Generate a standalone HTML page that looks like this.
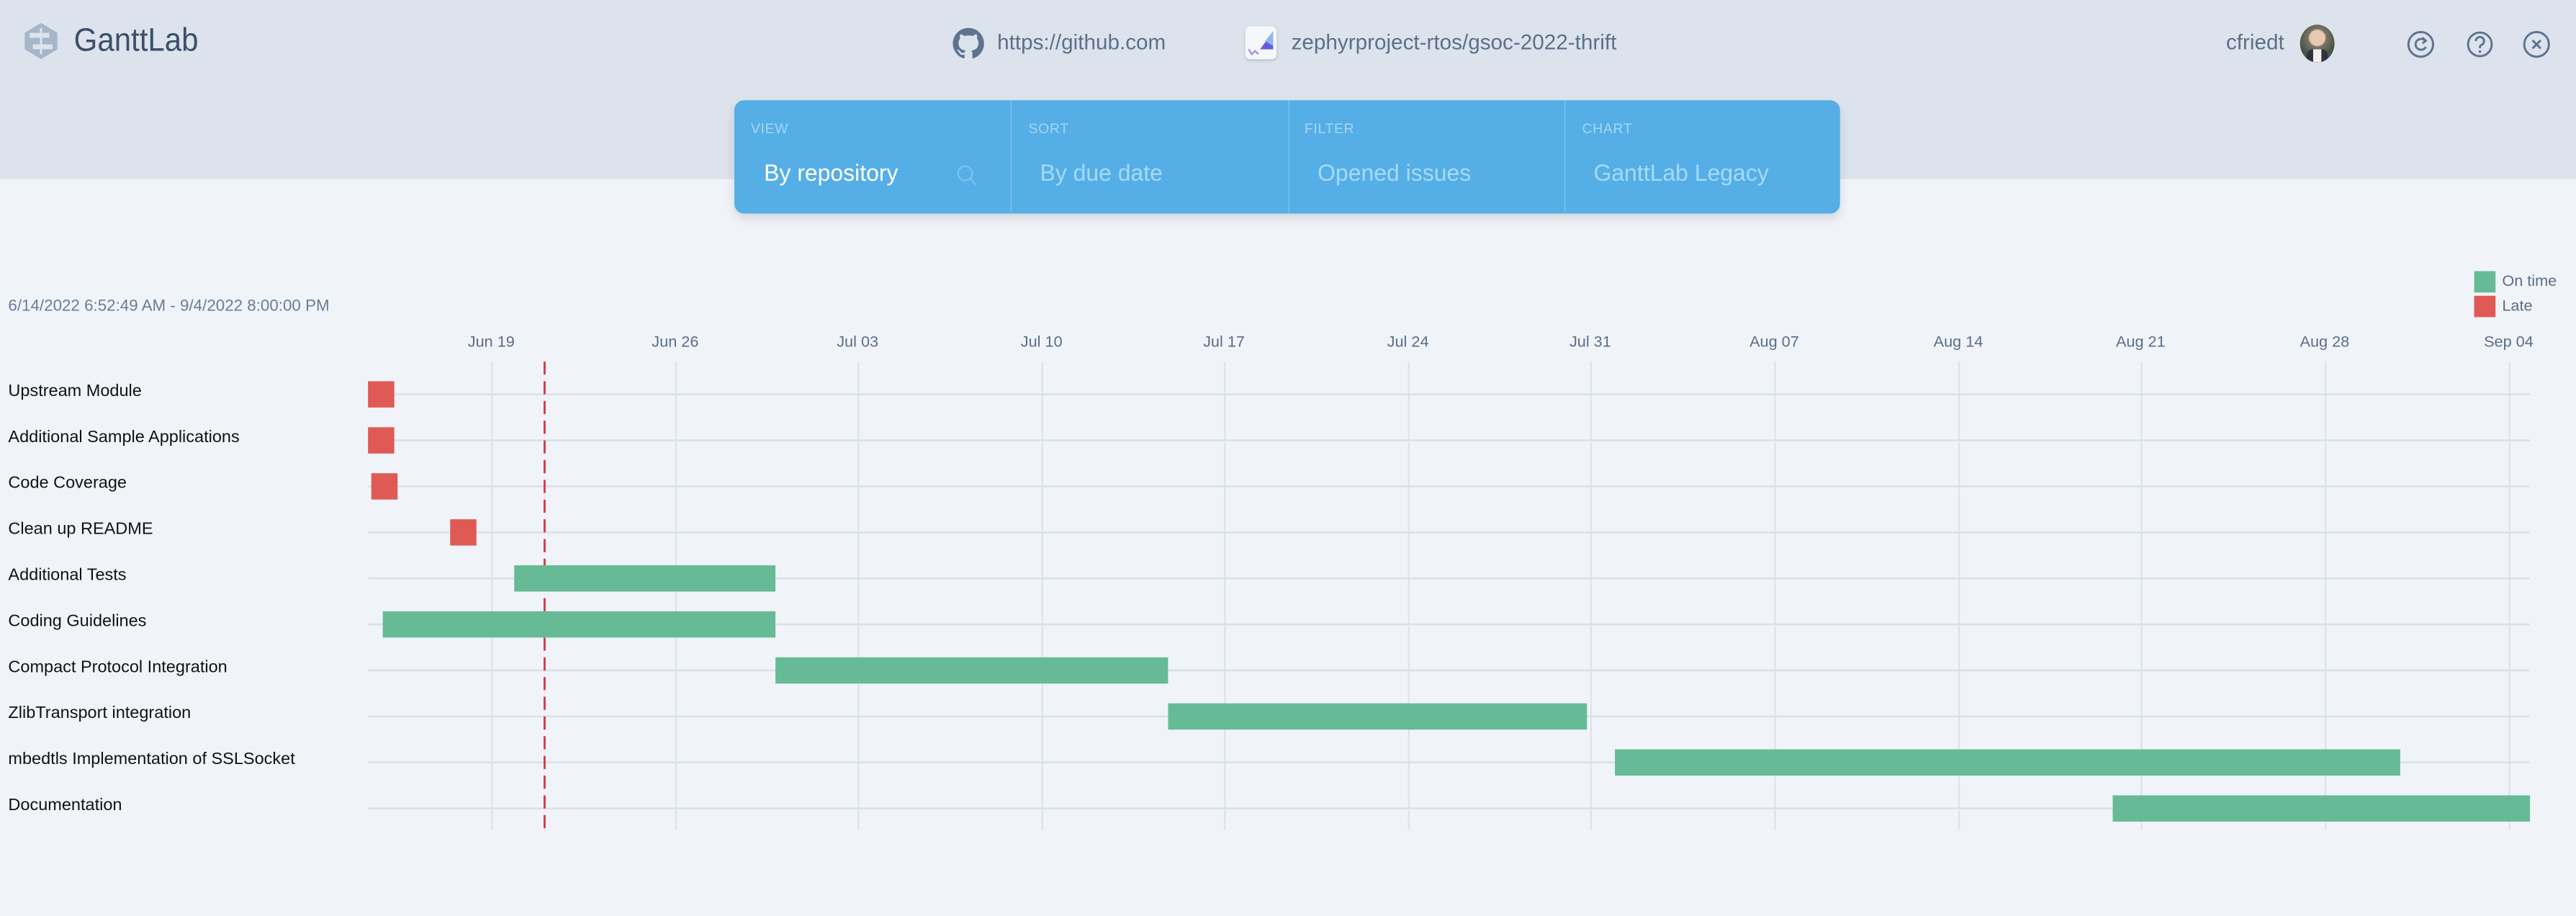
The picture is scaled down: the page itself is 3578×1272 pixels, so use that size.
<!DOCTYPE html>
<html><head><meta charset="utf-8"><style>
html,body{margin:0;padding:0;width:3578px;height:1272px;overflow:hidden;background:#f0f4f9}
#w{position:absolute;left:0;top:0;width:1568px;height:557.4px;transform:scale(2.2819);transform-origin:0 0;font-family:"Liberation Sans",sans-serif}
.a{position:absolute;white-space:nowrap}
#hd{position:absolute;left:0;top:0;width:1568px;height:109px;background:#dce3ec}
.lbl{font-size:8.5px;color:#a6d6f4;letter-spacing:.3px}
.val{font-size:14px;color:#a5daf8;top:97px}
.ax{font-size:9.5px;color:#5a6d88;top:203px;transform:translateX(-50%)}
.rl{font-size:10.3px;color:#111;left:5px}
.bar{position:absolute;height:16px}
.g{background:#66bb96}.r{background:#df5a54}
</style></head><body><div id="w">
<div id="hd"></div>
<svg class="a" style="left:15px;top:14px" width="20" height="22" viewBox="0 0 20 22"><polygon points="10,0 20,6 20,16 10,22 0,16 0,6" fill="#a6b5ca"/><rect x="3" y="6" width="12" height="3" fill="#dce3ec"/><rect x="5" y="13" width="12" height="3" fill="#dce3ec"/><rect x="9.3" y="3" width="1.4" height="16" fill="#dce3ec"/></svg>
<div class="a" style="left:45px;top:14px;font-size:20px;color:#3d4f6a;transform:scaleX(.92);transform-origin:left">GanttLab</div>
<svg class="a" style="left:580px;top:17px" width="19" height="19" viewBox="0 0 16 16"><path fill="#5f7390" d="M8 0C3.58 0 0 3.58 0 8c0 3.54 2.29 6.53 5.47 7.59.4.07.55-.17.55-.38 0-.19-.01-.82-.01-1.49-2.01.37-2.53-.49-2.69-.94-.09-.23-.48-.94-.82-1.13-.28-.15-.68-.52-.01-.53.63-.01 1.080.58 1.23.82.72 1.21 1.87.87 2.33.66.07-.52.28-.87.51-1.07-1.78-.2-3.64-.89-3.64-3.95 0-.87.31-1.59.82-2.15-.08-.2-.36-1.02.08-2.12 0 0 .67-.21 2.2.82.64-.18 1.32-.27 2-.27.68 0 1.36.09 2 .27 1.53-1.04 2.2-.82 2.2-.82.44 1.1.16 1.92.08 2.12.51.56.82 1.27.82 2.15 0 3.07-1.87 3.75-3.65 3.95.29.25.54.73.54 1.48 0 1.07-.01 1.93-.01 2.2 0 .21.15.46.55.38A8.013 8.013 0 0016 8c0-4.42-3.58-8-8-8z"/></svg>
<div class="a" style="left:607px;top:18px;font-size:13px;color:#5d6f8a">https://github.com</div>
<div class="a" style="left:758px;top:16px;width:19px;height:20px;background:#f5f7fa;border-radius:3px;box-shadow:0 1px 2px rgba(0,0,0,.15)"><svg width="19" height="20" viewBox="0 0 19 20"><polygon points="17,3 17,14 9,14" fill="#6a5be0"/><polygon points="17,3 12,9 17,12" fill="#8fb5f5"/><path d="M2 14 L4 17 L6 15 L8 17" stroke="#a887e8" stroke-width="1" fill="none"/></svg></div>
<div class="a" style="left:786px;top:18px;font-size:13px;color:#5d6f8a">zephyrproject-rtos/gsoc-2022-thrift</div>
<div class="a" style="left:1355px;top:18px;font-size:13px;color:#5d6f8a">cfriedt</div>
<div class="a" style="left:1400px;top:15px;width:21px;height:23px;border-radius:50%;background:radial-gradient(circle at 50% 35%,#e8c8b0 0 25%,#7a7566 30%,#4c5448 60%);overflow:hidden"><div style="position:absolute;left:4px;top:15px;width:13px;height:9px;background:#2f3040;border-radius:4px 4px 0 0"></div><div style="position:absolute;left:8px;top:15px;width:5px;height:8px;background:#eee"></div></div>
<svg class="a" style="left:1464px;top:17px" width="90" height="20" viewBox="0 0 90 20">
<g fill="none" stroke="#5f7390" stroke-width="1.3"><circle cx="9.5" cy="10" r="7.5"/><path d="M12.3 8 A3.3 3.3 0 1 0 12.6 11.5"/><path d="M10.5 5.8 L12.6 7.8 L10.6 9.4" /><circle cx="45.5" cy="10" r="7.2"/><path d="M43 8 A2.5 2.5 0 1 1 46.5 10.3 C45.6 10.8 45.5 11.3 45.5 12.3"/><circle cx="80" cy="10" r="7.5"/><path d="M77.5 7.5 L82.5 12.5 M82.5 7.5 L77.5 12.5"/></g><circle cx="45.5" cy="14.4" r=".8" fill="#5f7390"/></svg>
<div class="a" style="left:447px;top:61px;width:673px;height:69px;background:#55aee6;border-radius:6px;box-shadow:0 3px 6px rgba(0,0,0,.12)"></div>
<div class="a" style="left:615px;top:61px;width:1px;height:69px;background:#6fbcec"></div>
<div class="a" style="left:784px;top:61px;width:1px;height:69px;background:#6fbcec"></div>
<div class="a" style="left:952px;top:61px;width:1px;height:69px;background:#6fbcec"></div>
<div class="a lbl" style="left:457px;top:73px">VIEW</div>
<div class="a lbl" style="left:626px;top:73px">SORT</div>
<div class="a lbl" style="left:794px;top:73px">FILTER</div>
<div class="a lbl" style="left:963px;top:73px">CHART</div>
<div class="a val" style="left:465px;color:#fff">By repository</div>
<div class="a val" style="left:633px">By due date</div>
<div class="a val" style="left:802px">Opened issues</div>
<div class="a val" style="left:970px">GanttLab Legacy</div>
<svg class="a" style="left:582px;top:100px" width="14" height="14" viewBox="0 0 14 14"><circle cx="5.5" cy="5.5" r="4.3" fill="none" stroke="#7cc2ee" stroke-width="1"/><path d="M8.6 8.6 L12 12.5" stroke="#7cc2ee" stroke-width="1"/></svg>
<div class="a" style="left:5px;top:181px;font-size:9.8px;color:#6b7c93">6/14/2022 6:52:49 AM - 9/4/2022 8:00:00 PM</div>
<div class="a" style="left:1506px;top:165px;width:13px;height:13px;background:#66bb96"></div>
<div class="a" style="left:1506px;top:180px;width:13px;height:13px;background:#df5a54"></div>
<div class="a" style="left:1523px;top:166px;font-size:9.5px;color:#5a6d88">On time</div>
<div class="a" style="left:1523px;top:181px;font-size:9.5px;color:#5a6d88">Late</div>
<svg class="a" style="left:0;top:0" width="1568" height="557">
<g stroke="#dde3eb" stroke-width="1">
<line x1="299.5" y1="220" x2="299.5" y2="505"/><line x1="411.5" y1="220" x2="411.5" y2="505"/><line x1="522.5" y1="220" x2="522.5" y2="505"/><line x1="634.5" y1="220" x2="634.5" y2="505"/><line x1="745.5" y1="220" x2="745.5" y2="505"/><line x1="857.5" y1="220" x2="857.5" y2="505"/><line x1="968.5" y1="220" x2="968.5" y2="505"/><line x1="1080.5" y1="220" x2="1080.5" y2="505"/><line x1="1192.5" y1="220" x2="1192.5" y2="505"/><line x1="1303.5" y1="220" x2="1303.5" y2="505"/><line x1="1415.5" y1="220" x2="1415.5" y2="505"/><line x1="1527.5" y1="220" x2="1527.5" y2="505"/>
</g>
<g stroke="#dbe1ea" stroke-width="1.2">
<line x1="224" y1="240" x2="1540" y2="240"/><line x1="224" y1="268" x2="1540" y2="268"/><line x1="224" y1="296" x2="1540" y2="296"/><line x1="224" y1="324" x2="1540" y2="324"/><line x1="224" y1="352" x2="1540" y2="352"/><line x1="224" y1="380" x2="1540" y2="380"/><line x1="224" y1="408" x2="1540" y2="408"/><line x1="224" y1="436" x2="1540" y2="436"/><line x1="224" y1="464" x2="1540" y2="464"/><line x1="224" y1="492" x2="1540" y2="492"/>
</g>
<line x1="331.5" y1="220" x2="331.5" y2="505" stroke="#d44048" stroke-width="1.3" stroke-dasharray="8,4"/>
</svg>
<div class="a ax" style="left:299px">Jun 19</div><div class="a ax" style="left:411px">Jun 26</div><div class="a ax" style="left:522px">Jul 03</div><div class="a ax" style="left:634px">Jul 10</div><div class="a ax" style="left:745px">Jul 17</div><div class="a ax" style="left:857px">Jul 24</div><div class="a ax" style="left:968px">Jul 31</div><div class="a ax" style="left:1080px">Aug 07</div><div class="a ax" style="left:1192px">Aug 14</div><div class="a ax" style="left:1303px">Aug 21</div><div class="a ax" style="left:1415px">Aug 28</div><div class="a ax" style="left:1527px">Sep 04</div>
<div class="a rl" style="top:233px">Upstream Module</div>
<div class="a rl" style="top:261px">Additional Sample Applications</div>
<div class="a rl" style="top:289px">Code Coverage</div>
<div class="a rl" style="top:317px">Clean up README</div>
<div class="a rl" style="top:345px">Additional Tests</div>
<div class="a rl" style="top:373px">Coding Guidelines</div>
<div class="a rl" style="top:401px">Compact Protocol Integration</div>
<div class="a rl" style="top:429px">ZlibTransport integration</div>
<div class="a rl" style="top:457px">mbedtls Implementation of SSLSocket</div>
<div class="a rl" style="top:485px">Documentation</div>
<div class="bar r" style="left:224px;top:232px;width:16px"></div>
<div class="bar r" style="left:224px;top:260px;width:16px"></div>
<div class="bar r" style="left:226px;top:288px;width:16px"></div>
<div class="bar r" style="left:274px;top:316px;width:16px"></div>
<div class="bar g" style="left:313px;top:344px;width:159px"></div>
<div class="bar g" style="left:233px;top:372px;width:239px"></div>
<div class="bar g" style="left:472px;top:400px;width:239px"></div>
<div class="bar g" style="left:711px;top:428px;width:255px"></div>
<div class="bar g" style="left:983px;top:456px;width:478px"></div>
<div class="bar g" style="left:1286px;top:484px;width:254px"></div>
</div></body></html>
